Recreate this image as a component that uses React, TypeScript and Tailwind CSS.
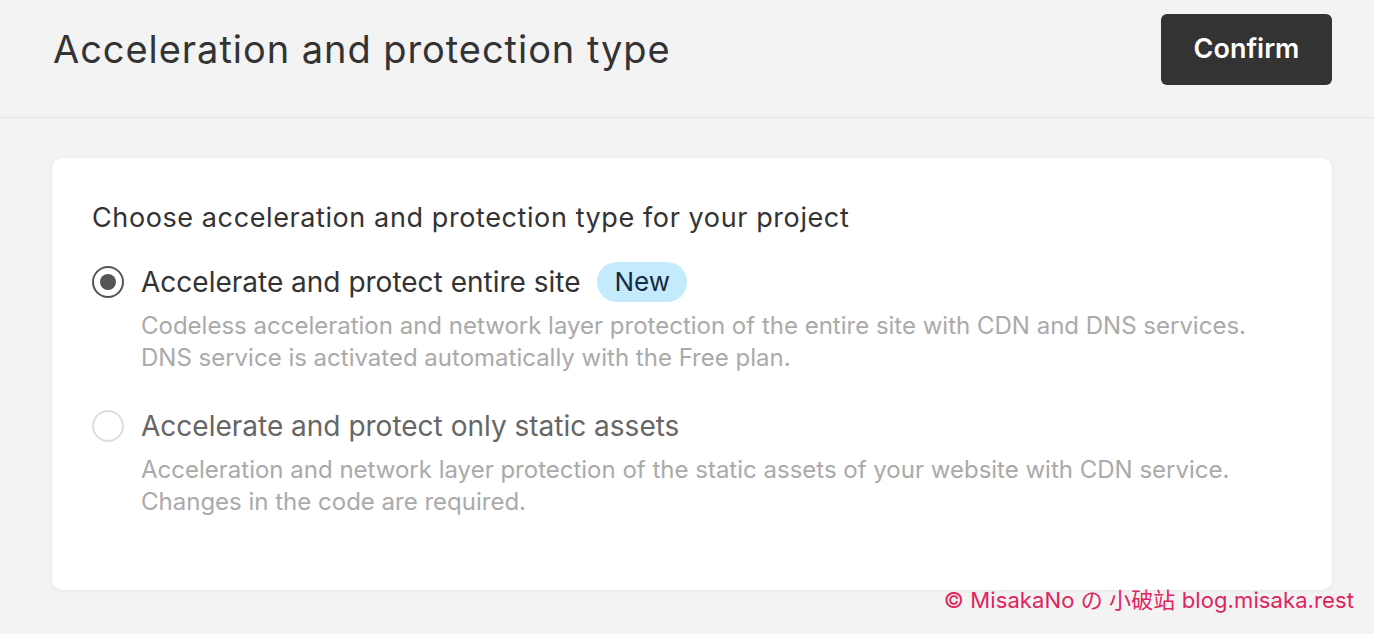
export default function App() {
  return (
    <div
      className="relative min-h-[634px] w-full bg-[#f4f3f4] text-[#333]"
      style={{ fontFamily: "Inter, 'Noto Sans CJK SC', sans-serif" }}
    >
      <header className="flex h-[118px] items-center justify-between border-b border-[#e4e3e4] pl-[53px] pr-[42px] pb-[19px]">
        <h1 className="text-[38px] font-normal tracking-[0.95px] text-[#333]">Acceleration and protection type</h1>
        <button className="h-[71px] w-[171px] rounded-[6px] bg-[#333] text-[27px] font-semibold text-white">
          Confirm
        </button>
      </header>

      <div className="pl-[52px] pr-[42px] pt-[40px]">
        <div className="rounded-[10px] bg-white px-[40px] pt-[42px] pb-[72px] shadow-[0_1px_4px_rgba(0,0,0,0.06)]">
          <h2 className="text-[27px] leading-[36px] tracking-[0.6px] text-[#333]">
            Choose acceleration and protection type for your project
          </h2>

          <div className="mt-[18px] flex flex-col gap-[24px]">
            <div className="flex gap-[17px]">
              <span className="mt-[12px] flex h-[32px] w-[32px] shrink-0 items-center justify-center rounded-full border-2 border-[#555]">
                <span className="h-[16px] w-[16px] rounded-full bg-[#555]" />
              </span>
              <div className="flex flex-col">
                <div className="flex h-[56px] items-center gap-[17px]">
                  <span className="text-[28px] text-[#333]">Accelerate and protect entire site</span>
                  <span className="rounded-full bg-[#c4ebfb] px-[17px] text-[26px] leading-[40px] text-[#1a2a44]">New</span>
                </div>
                <p className="text-[24px] leading-[32px] text-[#aaa]">
                  Codeless acceleration and network layer protection of the entire site with CDN and DNS services.
                  <br />
                  DNS service is activated automatically with the Free plan.
                </p>
              </div>
            </div>

            <div className="flex gap-[17px]">
              <span className="mt-[12px] h-[32px] w-[32px] shrink-0 rounded-full border-2 border-[#ddd]" />
              <div className="flex flex-col">
                <div className="flex h-[56px] items-center">
                  <span className="text-[28px] text-[#666]">Accelerate and protect only static assets</span>
                </div>
                <p className="text-[24px] leading-[32px] text-[#aaa]">
                  Acceleration and network layer protection of the static assets of your website with CDN service.
                  <br />
                  Changes in the code are required.
                </p>
              </div>
            </div>
          </div>
        </div>
      </div>

      <div className="absolute bottom-[17px] right-[20px] text-[22px] tracking-[0.1px] text-[#e0245e]">
        © MisakaNo の 小破站 blog.misaka.rest
      </div>
    </div>
  )
}
